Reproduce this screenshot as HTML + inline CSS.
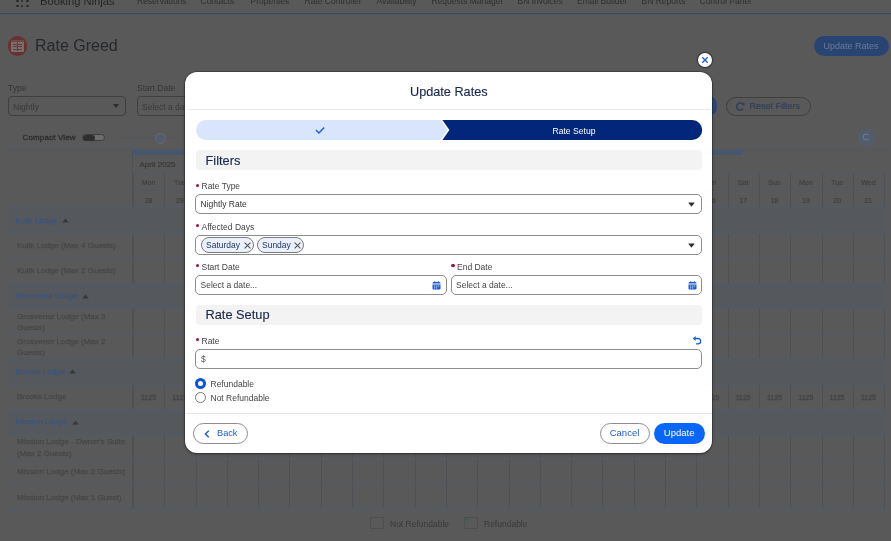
<!DOCTYPE html>
<html><head><meta charset="utf-8"><style>
html,body{margin:0;padding:0;width:891px;height:541px;overflow:hidden;background:#595959;}
body{position:relative;font-family:"Liberation Sans", sans-serif;}
.a{position:absolute;}
.t{position:absolute;line-height:1;white-space:nowrap;}
</style></head><body><div style="position:absolute;left:0;top:0;width:891px;height:541px;will-change:transform">
<div class="a" style="left:0px;top:0px;width:891px;height:541px;background:#595959;"></div>
<div class="a" style="left:16.3px;top:-4.7px;width:2.4px;height:2.4px;background:#2c2c2c;border-radius:50%;"></div>
<div class="a" style="left:16.3px;top:0.10000000000000009px;width:2.4px;height:2.4px;background:#2c2c2c;border-radius:50%;"></div>
<div class="a" style="left:16.3px;top:4.8px;width:2.4px;height:2.4px;background:#2c2c2c;border-radius:50%;"></div>
<div class="a" style="left:21.1px;top:-4.7px;width:2.4px;height:2.4px;background:#2c2c2c;border-radius:50%;"></div>
<div class="a" style="left:21.1px;top:0.10000000000000009px;width:2.4px;height:2.4px;background:#2c2c2c;border-radius:50%;"></div>
<div class="a" style="left:21.1px;top:4.8px;width:2.4px;height:2.4px;background:#2c2c2c;border-radius:50%;"></div>
<div class="a" style="left:26.2px;top:-4.7px;width:2.4px;height:2.4px;background:#2c2c2c;border-radius:50%;"></div>
<div class="a" style="left:26.2px;top:0.10000000000000009px;width:2.4px;height:2.4px;background:#2c2c2c;border-radius:50%;"></div>
<div class="a" style="left:26.2px;top:4.8px;width:2.4px;height:2.4px;background:#2c2c2c;border-radius:50%;"></div>
<div class="t" style="left:40px;top:-4.28px;font-size:11.2px;color:#262626;font-weight:400;">Booking Ninjas</div>
<div class="t" style="left:137px;top:-3.20px;font-size:8.5px;color:#2e2e2e;font-weight:400;">Reservations</div>
<div class="t" style="left:200.5px;top:-3.20px;font-size:8.5px;color:#2e2e2e;font-weight:400;">Contacts</div>
<div class="t" style="left:250.5px;top:-3.20px;font-size:8.5px;color:#2e2e2e;font-weight:400;">Properties</div>
<div class="t" style="left:304.5px;top:-3.20px;font-size:8.5px;color:#2e2e2e;font-weight:400;">Rate Controller</div>
<div class="t" style="left:376.5px;top:-3.20px;font-size:8.5px;color:#2e2e2e;font-weight:400;">Availability</div>
<div class="t" style="left:431.5px;top:-3.20px;font-size:8.5px;color:#2e2e2e;font-weight:400;">Requests Manager</div>
<div class="t" style="left:517.5px;top:-3.20px;font-size:8.5px;color:#2e2e2e;font-weight:400;">BN Invoices</div>
<div class="t" style="left:577px;top:-3.20px;font-size:8.5px;color:#2e2e2e;font-weight:400;">Email Builder</div>
<div class="t" style="left:641.5px;top:-3.20px;font-size:8.5px;color:#2e2e2e;font-weight:400;">BN Reports</div>
<div class="t" style="left:699.5px;top:-3.20px;font-size:8.5px;color:#2e2e2e;font-weight:400;">Control Panel</div>
<div class="a" style="left:0px;top:12.6px;width:891px;height:1.8px;background:#3b4a62;"></div>
<div class="a" style="left:0px;top:14px;width:891px;height:1px;background:#505357;"></div>
<div class="a" style="left:7.8px;top:36.2px;width:19.5px;height:19.5px;background:#6a302d;border-radius:50%;"></div>
<div class="a" style="left:11.3px;top:39.8px;width:12.4px;height:12.6px;background:#77706f;border-radius:1.2px;"></div>
<div class="a" style="left:11.3px;top:39.8px;width:12.4px;height:2.6px;background:#6a4a48;border-radius:1.2px 1.2px 0 0;"></div>
<div class="a" style="left:12.6px;top:43.6px;width:9.8px;height:0.7px;background:#6a3a38;"></div>
<div class="a" style="left:12.6px;top:46.2px;width:9.8px;height:0.7px;background:#6a3a38;"></div>
<div class="a" style="left:12.6px;top:48.8px;width:9.8px;height:0.7px;background:#6a3a38;"></div>
<div class="a" style="left:16.8px;top:42.4px;width:0.7px;height:8.6px;background:#6a3a38;"></div>
<div class="t" style="left:35px;top:38.46px;font-size:16px;color:#25282c;font-weight:400;">Rate Greed</div>
<div class="a" style="left:814px;top:36.4px;width:75px;height:19.6px;background:#284472;border-radius:10px;"></div>
<div class="t" style="left:823.5px;top:41.88px;font-size:9px;color:#6b7a94;font-weight:400;">Update Rates</div>
<div class="t" style="left:8px;top:84.30px;font-size:8.5px;color:#363636;font-weight:400;">Type</div>
<div class="a" style="left:8px;top:96px;width:118px;height:20px;border:1px solid #3f3f3f;border-radius:4px;box-sizing:border-box;"></div>
<div class="t" style="left:13px;top:103.10px;font-size:8.5px;color:#383838;font-weight:400;">Nightly</div>
<div class="a" style="left:113px;top:104px;width:0;height:0;border-left:3.5px solid transparent;border-right:3.5px solid transparent;border-top:4px solid #2e2e2e;"></div>
<div class="t" style="left:137px;top:84.30px;font-size:8.5px;color:#363636;font-weight:400;">Start Date</div>
<div class="a" style="left:137px;top:96px;width:118px;height:20px;border:1px solid #3f3f3f;border-radius:4px;box-sizing:border-box;"></div>
<div class="t" style="left:142px;top:103.10px;font-size:8.5px;color:#3a3a3a;font-weight:400;">Select a date...</div>
<div class="a" style="left:700px;top:96px;width:17px;height:20px;background:#2d4670;border-radius:10px;"></div>
<div class="a" style="left:726px;top:96.5px;width:85px;height:19.5px;border:1px solid #3f3f3f;border-radius:10px;box-sizing:border-box;"></div>
<div class="t" style="left:749.5px;top:101.88px;font-size:9px;color:#323f5c;font-weight:400;-webkit-text-stroke:0.2px #323f5c;">Reset Filters</div>
<svg class="a" style="left:734.5px;top:101px" width="11" height="11" viewBox="0 0 11 11"><path d="M8.6 4.2 A3.6 3.6 0 1 0 8.2 7.6" fill="none" stroke="#323f5c" stroke-width="1.6"/><path d="M6.6 2.4 L9.6 1.6 L9.2 5 Z" fill="#323f5c"/></svg>
<div class="a" style="left:7.5px;top:128px;width:881px;height:420px;border:1px solid #57595c;box-sizing:border-box;"></div>
<div class="t" style="left:22.5px;top:134.23px;font-size:8px;color:#2e2e2e;font-weight:400;-webkit-text-stroke:0.35px #2e2e2e;letter-spacing:0.15px;">Compact View</div>
<div class="a" style="left:82px;top:134.2px;width:23px;height:7px;background:#6c6c6c;border-radius:3.5px;border:1px solid #3e3e3e;box-sizing:border-box;"></div>
<div class="a" style="left:82.5px;top:134.5px;width:12px;height:6.5px;background:#2f2f2f;border-radius:3.5px;"></div>
<div class="a" style="left:119px;top:137.5px;width:57px;height:1px;background:#4f555e;"></div>
<div class="a" style="left:155px;top:132.5px;width:11px;height:11px;background:#535d69;border-radius:50%;border:1px solid #646b74;box-sizing:border-box;"></div>
<div class="a" style="left:857.5px;top:128.5px;width:17px;height:17px;background:#515c6c;border-radius:50%;"></div>
<svg class="a" style="left:861px;top:132px" width="10" height="10" viewBox="0 0 10 10"><path d="M7.5 3 A3 3 0 1 0 7.5 7" fill="none" stroke="#6d7a8c" stroke-width="1.2"/></svg>
<div class="a" style="left:8px;top:144.5px;width:880px;height:1px;background:#585a5d;"></div>
<div class="a" style="left:8px;top:148.5px;width:880px;height:1.2px;background:#505862;"></div>
<div class="a" style="left:132.5px;top:149.5px;width:610px;height:5.5px;background:#46566e;"></div>
<div class="t" style="left:139.5px;top:160.73px;font-size:8px;color:#383838;font-weight:400;-webkit-text-stroke:0.2px #383838;">April 2025</div>
<div class="a" style="left:132.5px;top:173px;width:752px;height:1px;background:#4f5864;"></div>
<div class="a" style="left:132.5px;top:190px;width:752px;height:1px;background:#4f5864;"></div>
<div class="a" style="left:132.9px;top:173px;width:1px;height:35px;background:#4e5156;"></div>
<div class="t" style="left:132.90px;width:31.3px;text-align:center;top:178.57px;font-size:7px;color:#404040;font-weight:400;-webkit-text-stroke:0.2px #404040;">Mon</div>
<div class="t" style="left:132.90px;width:31.3px;text-align:center;top:196.57px;font-size:7px;color:#404040;font-weight:400;-webkit-text-stroke:0.2px #404040;">28</div>
<div class="a" style="left:164.20000000000002px;top:173px;width:1px;height:35px;background:#4e5156;"></div>
<div class="t" style="left:164.20px;width:31.3px;text-align:center;top:178.57px;font-size:7px;color:#404040;font-weight:400;-webkit-text-stroke:0.2px #404040;">Tue</div>
<div class="t" style="left:164.20px;width:31.3px;text-align:center;top:196.57px;font-size:7px;color:#404040;font-weight:400;-webkit-text-stroke:0.2px #404040;">29</div>
<div class="a" style="left:195.5px;top:173px;width:1px;height:35px;background:#4e5156;"></div>
<div class="t" style="left:195.50px;width:31.3px;text-align:center;top:178.57px;font-size:7px;color:#404040;font-weight:400;-webkit-text-stroke:0.2px #404040;">Wed</div>
<div class="t" style="left:195.50px;width:31.3px;text-align:center;top:196.57px;font-size:7px;color:#404040;font-weight:400;-webkit-text-stroke:0.2px #404040;">30</div>
<div class="a" style="left:226.8px;top:173px;width:1px;height:35px;background:#4e5156;"></div>
<div class="t" style="left:226.80px;width:31.3px;text-align:center;top:178.57px;font-size:7px;color:#404040;font-weight:400;-webkit-text-stroke:0.2px #404040;">Thu</div>
<div class="t" style="left:226.80px;width:31.3px;text-align:center;top:196.57px;font-size:7px;color:#404040;font-weight:400;-webkit-text-stroke:0.2px #404040;">1</div>
<div class="a" style="left:258.1px;top:173px;width:1px;height:35px;background:#4e5156;"></div>
<div class="t" style="left:258.10px;width:31.3px;text-align:center;top:178.57px;font-size:7px;color:#404040;font-weight:400;-webkit-text-stroke:0.2px #404040;">Fri</div>
<div class="t" style="left:258.10px;width:31.3px;text-align:center;top:196.57px;font-size:7px;color:#404040;font-weight:400;-webkit-text-stroke:0.2px #404040;">2</div>
<div class="a" style="left:289.4px;top:173px;width:1px;height:35px;background:#4e5156;"></div>
<div class="t" style="left:289.40px;width:31.3px;text-align:center;top:178.57px;font-size:7px;color:#404040;font-weight:400;-webkit-text-stroke:0.2px #404040;">Sat</div>
<div class="t" style="left:289.40px;width:31.3px;text-align:center;top:196.57px;font-size:7px;color:#404040;font-weight:400;-webkit-text-stroke:0.2px #404040;">3</div>
<div class="a" style="left:320.70000000000005px;top:173px;width:1px;height:35px;background:#4e5156;"></div>
<div class="t" style="left:320.70px;width:31.3px;text-align:center;top:178.57px;font-size:7px;color:#404040;font-weight:400;-webkit-text-stroke:0.2px #404040;">Sun</div>
<div class="t" style="left:320.70px;width:31.3px;text-align:center;top:196.57px;font-size:7px;color:#404040;font-weight:400;-webkit-text-stroke:0.2px #404040;">4</div>
<div class="a" style="left:352.0px;top:173px;width:1px;height:35px;background:#4e5156;"></div>
<div class="t" style="left:352.00px;width:31.3px;text-align:center;top:178.57px;font-size:7px;color:#404040;font-weight:400;-webkit-text-stroke:0.2px #404040;">Mon</div>
<div class="t" style="left:352.00px;width:31.3px;text-align:center;top:196.57px;font-size:7px;color:#404040;font-weight:400;-webkit-text-stroke:0.2px #404040;">5</div>
<div class="a" style="left:383.3px;top:173px;width:1px;height:35px;background:#4e5156;"></div>
<div class="t" style="left:383.30px;width:31.3px;text-align:center;top:178.57px;font-size:7px;color:#404040;font-weight:400;-webkit-text-stroke:0.2px #404040;">Tue</div>
<div class="t" style="left:383.30px;width:31.3px;text-align:center;top:196.57px;font-size:7px;color:#404040;font-weight:400;-webkit-text-stroke:0.2px #404040;">6</div>
<div class="a" style="left:414.6px;top:173px;width:1px;height:35px;background:#4e5156;"></div>
<div class="t" style="left:414.60px;width:31.3px;text-align:center;top:178.57px;font-size:7px;color:#404040;font-weight:400;-webkit-text-stroke:0.2px #404040;">Wed</div>
<div class="t" style="left:414.60px;width:31.3px;text-align:center;top:196.57px;font-size:7px;color:#404040;font-weight:400;-webkit-text-stroke:0.2px #404040;">7</div>
<div class="a" style="left:445.9px;top:173px;width:1px;height:35px;background:#4e5156;"></div>
<div class="t" style="left:445.90px;width:31.3px;text-align:center;top:178.57px;font-size:7px;color:#404040;font-weight:400;-webkit-text-stroke:0.2px #404040;">Thu</div>
<div class="t" style="left:445.90px;width:31.3px;text-align:center;top:196.57px;font-size:7px;color:#404040;font-weight:400;-webkit-text-stroke:0.2px #404040;">8</div>
<div class="a" style="left:477.20000000000005px;top:173px;width:1px;height:35px;background:#4e5156;"></div>
<div class="t" style="left:477.20px;width:31.3px;text-align:center;top:178.57px;font-size:7px;color:#404040;font-weight:400;-webkit-text-stroke:0.2px #404040;">Fri</div>
<div class="t" style="left:477.20px;width:31.3px;text-align:center;top:196.57px;font-size:7px;color:#404040;font-weight:400;-webkit-text-stroke:0.2px #404040;">9</div>
<div class="a" style="left:508.5px;top:173px;width:1px;height:35px;background:#4e5156;"></div>
<div class="t" style="left:508.50px;width:31.3px;text-align:center;top:178.57px;font-size:7px;color:#404040;font-weight:400;-webkit-text-stroke:0.2px #404040;">Sat</div>
<div class="t" style="left:508.50px;width:31.3px;text-align:center;top:196.57px;font-size:7px;color:#404040;font-weight:400;-webkit-text-stroke:0.2px #404040;">10</div>
<div class="a" style="left:539.8000000000001px;top:173px;width:1px;height:35px;background:#4e5156;"></div>
<div class="t" style="left:539.80px;width:31.3px;text-align:center;top:178.57px;font-size:7px;color:#404040;font-weight:400;-webkit-text-stroke:0.2px #404040;">Sun</div>
<div class="t" style="left:539.80px;width:31.3px;text-align:center;top:196.57px;font-size:7px;color:#404040;font-weight:400;-webkit-text-stroke:0.2px #404040;">11</div>
<div class="a" style="left:571.1px;top:173px;width:1px;height:35px;background:#4e5156;"></div>
<div class="t" style="left:571.10px;width:31.3px;text-align:center;top:178.57px;font-size:7px;color:#404040;font-weight:400;-webkit-text-stroke:0.2px #404040;">Mon</div>
<div class="t" style="left:571.10px;width:31.3px;text-align:center;top:196.57px;font-size:7px;color:#404040;font-weight:400;-webkit-text-stroke:0.2px #404040;">12</div>
<div class="a" style="left:602.4px;top:173px;width:1px;height:35px;background:#4e5156;"></div>
<div class="t" style="left:602.40px;width:31.3px;text-align:center;top:178.57px;font-size:7px;color:#404040;font-weight:400;-webkit-text-stroke:0.2px #404040;">Tue</div>
<div class="t" style="left:602.40px;width:31.3px;text-align:center;top:196.57px;font-size:7px;color:#404040;font-weight:400;-webkit-text-stroke:0.2px #404040;">13</div>
<div class="a" style="left:633.7px;top:173px;width:1px;height:35px;background:#4e5156;"></div>
<div class="t" style="left:633.70px;width:31.3px;text-align:center;top:178.57px;font-size:7px;color:#404040;font-weight:400;-webkit-text-stroke:0.2px #404040;">Wed</div>
<div class="t" style="left:633.70px;width:31.3px;text-align:center;top:196.57px;font-size:7px;color:#404040;font-weight:400;-webkit-text-stroke:0.2px #404040;">14</div>
<div class="a" style="left:665.0px;top:173px;width:1px;height:35px;background:#4e5156;"></div>
<div class="t" style="left:665.00px;width:31.3px;text-align:center;top:178.57px;font-size:7px;color:#404040;font-weight:400;-webkit-text-stroke:0.2px #404040;">Thu</div>
<div class="t" style="left:665.00px;width:31.3px;text-align:center;top:196.57px;font-size:7px;color:#404040;font-weight:400;-webkit-text-stroke:0.2px #404040;">15</div>
<div class="a" style="left:696.3px;top:173px;width:1px;height:35px;background:#4e5156;"></div>
<div class="t" style="left:696.30px;width:31.3px;text-align:center;top:178.57px;font-size:7px;color:#404040;font-weight:400;-webkit-text-stroke:0.2px #404040;">Fri</div>
<div class="t" style="left:696.30px;width:31.3px;text-align:center;top:196.57px;font-size:7px;color:#404040;font-weight:400;-webkit-text-stroke:0.2px #404040;">16</div>
<div class="a" style="left:727.6px;top:173px;width:1px;height:35px;background:#4e5156;"></div>
<div class="t" style="left:727.60px;width:31.3px;text-align:center;top:178.57px;font-size:7px;color:#404040;font-weight:400;-webkit-text-stroke:0.2px #404040;">Sat</div>
<div class="t" style="left:727.60px;width:31.3px;text-align:center;top:196.57px;font-size:7px;color:#404040;font-weight:400;-webkit-text-stroke:0.2px #404040;">17</div>
<div class="a" style="left:758.9px;top:173px;width:1px;height:35px;background:#4e5156;"></div>
<div class="t" style="left:758.90px;width:31.3px;text-align:center;top:178.57px;font-size:7px;color:#404040;font-weight:400;-webkit-text-stroke:0.2px #404040;">Sun</div>
<div class="t" style="left:758.90px;width:31.3px;text-align:center;top:196.57px;font-size:7px;color:#404040;font-weight:400;-webkit-text-stroke:0.2px #404040;">18</div>
<div class="a" style="left:790.2px;top:173px;width:1px;height:35px;background:#4e5156;"></div>
<div class="t" style="left:790.20px;width:31.3px;text-align:center;top:178.57px;font-size:7px;color:#404040;font-weight:400;-webkit-text-stroke:0.2px #404040;">Mon</div>
<div class="t" style="left:790.20px;width:31.3px;text-align:center;top:196.57px;font-size:7px;color:#404040;font-weight:400;-webkit-text-stroke:0.2px #404040;">19</div>
<div class="a" style="left:821.5px;top:173px;width:1px;height:35px;background:#4e5156;"></div>
<div class="t" style="left:821.50px;width:31.3px;text-align:center;top:178.57px;font-size:7px;color:#404040;font-weight:400;-webkit-text-stroke:0.2px #404040;">Tue</div>
<div class="t" style="left:821.50px;width:31.3px;text-align:center;top:196.57px;font-size:7px;color:#404040;font-weight:400;-webkit-text-stroke:0.2px #404040;">20</div>
<div class="a" style="left:852.8px;top:173px;width:1px;height:35px;background:#4e5156;"></div>
<div class="t" style="left:852.80px;width:31.3px;text-align:center;top:178.57px;font-size:7px;color:#404040;font-weight:400;-webkit-text-stroke:0.2px #404040;">Wed</div>
<div class="t" style="left:852.80px;width:31.3px;text-align:center;top:196.57px;font-size:7px;color:#404040;font-weight:400;-webkit-text-stroke:0.2px #404040;">21</div>
<div class="a" style="left:884.1px;top:173px;width:1px;height:337px;background:#4e5156;"></div>
<div class="a" style="left:131.5px;top:150px;width:1px;height:360px;background:#4e5156;"></div>
<div class="a" style="left:8px;top:207.4px;width:877px;height:25.17px;background:#55585c;"></div>
<div class="t" style="left:15.5px;top:216.63px;font-size:8px;color:#3a5582;font-weight:400;-webkit-text-stroke:0.25px #3a5582;">Kulik Lodge</div>
<svg class="a" style="left:60.8px;top:217.2px" width="9" height="7"><path d="M1.3 5.4 L4.5 1.6 L7.7 5.4 Z" fill="#35383d"/></svg>
<div class="a" style="left:8px;top:207.4px;width:877px;height:1px;background:#4f5a6a;"></div>
<div class="t" style="left:17px;top:241.80px;font-size:8px;color:#474747;font-weight:400;-webkit-text-stroke:0.25px #474747;">Kulik Lodge (Max 4 Guests)</div>
<div class="a" style="left:132.9px;top:232.57px;width:1px;height:25.17px;background:#4e5156;"></div>
<div class="a" style="left:164.20000000000002px;top:232.57px;width:1px;height:25.17px;background:#4e5156;"></div>
<div class="a" style="left:195.5px;top:232.57px;width:1px;height:25.17px;background:#4e5156;"></div>
<div class="a" style="left:226.8px;top:232.57px;width:1px;height:25.17px;background:#4e5156;"></div>
<div class="a" style="left:258.1px;top:232.57px;width:1px;height:25.17px;background:#4e5156;"></div>
<div class="a" style="left:289.4px;top:232.57px;width:1px;height:25.17px;background:#4e5156;"></div>
<div class="a" style="left:320.70000000000005px;top:232.57px;width:1px;height:25.17px;background:#4e5156;"></div>
<div class="a" style="left:352.0px;top:232.57px;width:1px;height:25.17px;background:#4e5156;"></div>
<div class="a" style="left:383.3px;top:232.57px;width:1px;height:25.17px;background:#4e5156;"></div>
<div class="a" style="left:414.6px;top:232.57px;width:1px;height:25.17px;background:#4e5156;"></div>
<div class="a" style="left:445.9px;top:232.57px;width:1px;height:25.17px;background:#4e5156;"></div>
<div class="a" style="left:477.20000000000005px;top:232.57px;width:1px;height:25.17px;background:#4e5156;"></div>
<div class="a" style="left:508.5px;top:232.57px;width:1px;height:25.17px;background:#4e5156;"></div>
<div class="a" style="left:539.8000000000001px;top:232.57px;width:1px;height:25.17px;background:#4e5156;"></div>
<div class="a" style="left:571.1px;top:232.57px;width:1px;height:25.17px;background:#4e5156;"></div>
<div class="a" style="left:602.4px;top:232.57px;width:1px;height:25.17px;background:#4e5156;"></div>
<div class="a" style="left:633.7px;top:232.57px;width:1px;height:25.17px;background:#4e5156;"></div>
<div class="a" style="left:665.0px;top:232.57px;width:1px;height:25.17px;background:#4e5156;"></div>
<div class="a" style="left:696.3px;top:232.57px;width:1px;height:25.17px;background:#4e5156;"></div>
<div class="a" style="left:727.6px;top:232.57px;width:1px;height:25.17px;background:#4e5156;"></div>
<div class="a" style="left:758.9px;top:232.57px;width:1px;height:25.17px;background:#4e5156;"></div>
<div class="a" style="left:790.2px;top:232.57px;width:1px;height:25.17px;background:#4e5156;"></div>
<div class="a" style="left:821.5px;top:232.57px;width:1px;height:25.17px;background:#4e5156;"></div>
<div class="a" style="left:852.8px;top:232.57px;width:1px;height:25.17px;background:#4e5156;"></div>
<div class="a" style="left:8px;top:232.57px;width:877px;height:1px;background:#4f5a6a;"></div>
<div class="t" style="left:17px;top:266.97px;font-size:8px;color:#474747;font-weight:400;-webkit-text-stroke:0.25px #474747;">Kulik Lodge (Max 2 Guests)</div>
<div class="a" style="left:132.9px;top:257.74px;width:1px;height:25.17px;background:#4e5156;"></div>
<div class="a" style="left:164.20000000000002px;top:257.74px;width:1px;height:25.17px;background:#4e5156;"></div>
<div class="a" style="left:195.5px;top:257.74px;width:1px;height:25.17px;background:#4e5156;"></div>
<div class="a" style="left:226.8px;top:257.74px;width:1px;height:25.17px;background:#4e5156;"></div>
<div class="a" style="left:258.1px;top:257.74px;width:1px;height:25.17px;background:#4e5156;"></div>
<div class="a" style="left:289.4px;top:257.74px;width:1px;height:25.17px;background:#4e5156;"></div>
<div class="a" style="left:320.70000000000005px;top:257.74px;width:1px;height:25.17px;background:#4e5156;"></div>
<div class="a" style="left:352.0px;top:257.74px;width:1px;height:25.17px;background:#4e5156;"></div>
<div class="a" style="left:383.3px;top:257.74px;width:1px;height:25.17px;background:#4e5156;"></div>
<div class="a" style="left:414.6px;top:257.74px;width:1px;height:25.17px;background:#4e5156;"></div>
<div class="a" style="left:445.9px;top:257.74px;width:1px;height:25.17px;background:#4e5156;"></div>
<div class="a" style="left:477.20000000000005px;top:257.74px;width:1px;height:25.17px;background:#4e5156;"></div>
<div class="a" style="left:508.5px;top:257.74px;width:1px;height:25.17px;background:#4e5156;"></div>
<div class="a" style="left:539.8000000000001px;top:257.74px;width:1px;height:25.17px;background:#4e5156;"></div>
<div class="a" style="left:571.1px;top:257.74px;width:1px;height:25.17px;background:#4e5156;"></div>
<div class="a" style="left:602.4px;top:257.74px;width:1px;height:25.17px;background:#4e5156;"></div>
<div class="a" style="left:633.7px;top:257.74px;width:1px;height:25.17px;background:#4e5156;"></div>
<div class="a" style="left:665.0px;top:257.74px;width:1px;height:25.17px;background:#4e5156;"></div>
<div class="a" style="left:696.3px;top:257.74px;width:1px;height:25.17px;background:#4e5156;"></div>
<div class="a" style="left:727.6px;top:257.74px;width:1px;height:25.17px;background:#4e5156;"></div>
<div class="a" style="left:758.9px;top:257.74px;width:1px;height:25.17px;background:#4e5156;"></div>
<div class="a" style="left:790.2px;top:257.74px;width:1px;height:25.17px;background:#4e5156;"></div>
<div class="a" style="left:821.5px;top:257.74px;width:1px;height:25.17px;background:#4e5156;"></div>
<div class="a" style="left:852.8px;top:257.74px;width:1px;height:25.17px;background:#4e5156;"></div>
<div class="a" style="left:8px;top:257.74px;width:877px;height:1px;background:#4f5a6a;"></div>
<div class="a" style="left:8px;top:282.91px;width:877px;height:25.17px;background:#55585c;"></div>
<div class="t" style="left:15.5px;top:292.14px;font-size:8px;color:#3a5582;font-weight:400;-webkit-text-stroke:0.25px #3a5582;">Grosvenor Lodge</div>
<svg class="a" style="left:80.8px;top:292.7px" width="9" height="7"><path d="M1.3 5.4 L4.5 1.6 L7.7 5.4 Z" fill="#35383d"/></svg>
<div class="a" style="left:8px;top:282.91px;width:877px;height:1px;background:#4f5a6a;"></div>
<div class="t" style="left:17px;top:310.58px;font-size:8px;line-height:11.5px;color:#474747;-webkit-text-stroke:0.25px #474747;">Grosvenor Lodge (Max 3<br>Guests)</div>
<div class="a" style="left:132.9px;top:308.08000000000004px;width:1px;height:25.17px;background:#4e5156;"></div>
<div class="a" style="left:164.20000000000002px;top:308.08000000000004px;width:1px;height:25.17px;background:#4e5156;"></div>
<div class="a" style="left:195.5px;top:308.08000000000004px;width:1px;height:25.17px;background:#4e5156;"></div>
<div class="a" style="left:226.8px;top:308.08000000000004px;width:1px;height:25.17px;background:#4e5156;"></div>
<div class="a" style="left:258.1px;top:308.08000000000004px;width:1px;height:25.17px;background:#4e5156;"></div>
<div class="a" style="left:289.4px;top:308.08000000000004px;width:1px;height:25.17px;background:#4e5156;"></div>
<div class="a" style="left:320.70000000000005px;top:308.08000000000004px;width:1px;height:25.17px;background:#4e5156;"></div>
<div class="a" style="left:352.0px;top:308.08000000000004px;width:1px;height:25.17px;background:#4e5156;"></div>
<div class="a" style="left:383.3px;top:308.08000000000004px;width:1px;height:25.17px;background:#4e5156;"></div>
<div class="a" style="left:414.6px;top:308.08000000000004px;width:1px;height:25.17px;background:#4e5156;"></div>
<div class="a" style="left:445.9px;top:308.08000000000004px;width:1px;height:25.17px;background:#4e5156;"></div>
<div class="a" style="left:477.20000000000005px;top:308.08000000000004px;width:1px;height:25.17px;background:#4e5156;"></div>
<div class="a" style="left:508.5px;top:308.08000000000004px;width:1px;height:25.17px;background:#4e5156;"></div>
<div class="a" style="left:539.8000000000001px;top:308.08000000000004px;width:1px;height:25.17px;background:#4e5156;"></div>
<div class="a" style="left:571.1px;top:308.08000000000004px;width:1px;height:25.17px;background:#4e5156;"></div>
<div class="a" style="left:602.4px;top:308.08000000000004px;width:1px;height:25.17px;background:#4e5156;"></div>
<div class="a" style="left:633.7px;top:308.08000000000004px;width:1px;height:25.17px;background:#4e5156;"></div>
<div class="a" style="left:665.0px;top:308.08000000000004px;width:1px;height:25.17px;background:#4e5156;"></div>
<div class="a" style="left:696.3px;top:308.08000000000004px;width:1px;height:25.17px;background:#4e5156;"></div>
<div class="a" style="left:727.6px;top:308.08000000000004px;width:1px;height:25.17px;background:#4e5156;"></div>
<div class="a" style="left:758.9px;top:308.08000000000004px;width:1px;height:25.17px;background:#4e5156;"></div>
<div class="a" style="left:790.2px;top:308.08000000000004px;width:1px;height:25.17px;background:#4e5156;"></div>
<div class="a" style="left:821.5px;top:308.08000000000004px;width:1px;height:25.17px;background:#4e5156;"></div>
<div class="a" style="left:852.8px;top:308.08000000000004px;width:1px;height:25.17px;background:#4e5156;"></div>
<div class="a" style="left:8px;top:308.08000000000004px;width:877px;height:1px;background:#4f5a6a;"></div>
<div class="t" style="left:17px;top:335.75px;font-size:8px;line-height:11.5px;color:#474747;-webkit-text-stroke:0.25px #474747;">Grosvenor Lodge (Max 2<br>Guests)</div>
<div class="a" style="left:132.9px;top:333.25px;width:1px;height:25.17px;background:#4e5156;"></div>
<div class="a" style="left:164.20000000000002px;top:333.25px;width:1px;height:25.17px;background:#4e5156;"></div>
<div class="a" style="left:195.5px;top:333.25px;width:1px;height:25.17px;background:#4e5156;"></div>
<div class="a" style="left:226.8px;top:333.25px;width:1px;height:25.17px;background:#4e5156;"></div>
<div class="a" style="left:258.1px;top:333.25px;width:1px;height:25.17px;background:#4e5156;"></div>
<div class="a" style="left:289.4px;top:333.25px;width:1px;height:25.17px;background:#4e5156;"></div>
<div class="a" style="left:320.70000000000005px;top:333.25px;width:1px;height:25.17px;background:#4e5156;"></div>
<div class="a" style="left:352.0px;top:333.25px;width:1px;height:25.17px;background:#4e5156;"></div>
<div class="a" style="left:383.3px;top:333.25px;width:1px;height:25.17px;background:#4e5156;"></div>
<div class="a" style="left:414.6px;top:333.25px;width:1px;height:25.17px;background:#4e5156;"></div>
<div class="a" style="left:445.9px;top:333.25px;width:1px;height:25.17px;background:#4e5156;"></div>
<div class="a" style="left:477.20000000000005px;top:333.25px;width:1px;height:25.17px;background:#4e5156;"></div>
<div class="a" style="left:508.5px;top:333.25px;width:1px;height:25.17px;background:#4e5156;"></div>
<div class="a" style="left:539.8000000000001px;top:333.25px;width:1px;height:25.17px;background:#4e5156;"></div>
<div class="a" style="left:571.1px;top:333.25px;width:1px;height:25.17px;background:#4e5156;"></div>
<div class="a" style="left:602.4px;top:333.25px;width:1px;height:25.17px;background:#4e5156;"></div>
<div class="a" style="left:633.7px;top:333.25px;width:1px;height:25.17px;background:#4e5156;"></div>
<div class="a" style="left:665.0px;top:333.25px;width:1px;height:25.17px;background:#4e5156;"></div>
<div class="a" style="left:696.3px;top:333.25px;width:1px;height:25.17px;background:#4e5156;"></div>
<div class="a" style="left:727.6px;top:333.25px;width:1px;height:25.17px;background:#4e5156;"></div>
<div class="a" style="left:758.9px;top:333.25px;width:1px;height:25.17px;background:#4e5156;"></div>
<div class="a" style="left:790.2px;top:333.25px;width:1px;height:25.17px;background:#4e5156;"></div>
<div class="a" style="left:821.5px;top:333.25px;width:1px;height:25.17px;background:#4e5156;"></div>
<div class="a" style="left:852.8px;top:333.25px;width:1px;height:25.17px;background:#4e5156;"></div>
<div class="a" style="left:8px;top:333.25px;width:877px;height:1px;background:#4f5a6a;"></div>
<div class="a" style="left:8px;top:358.42px;width:877px;height:25.17px;background:#55585c;"></div>
<div class="t" style="left:15.5px;top:367.65px;font-size:8px;color:#3a5582;font-weight:400;-webkit-text-stroke:0.25px #3a5582;">Brooks Lodge</div>
<svg class="a" style="left:68.4px;top:368.2px" width="9" height="7"><path d="M1.3 5.4 L4.5 1.6 L7.7 5.4 Z" fill="#35383d"/></svg>
<div class="a" style="left:8px;top:358.42px;width:877px;height:1px;background:#4f5a6a;"></div>
<div class="t" style="left:17px;top:392.82px;font-size:8px;color:#474747;font-weight:400;-webkit-text-stroke:0.25px #474747;">Brooks Lodge</div>
<div class="a" style="left:132.9px;top:383.59000000000003px;width:1px;height:25.17px;background:#4e5156;"></div>
<div class="a" style="left:164.20000000000002px;top:383.59000000000003px;width:1px;height:25.17px;background:#4e5156;"></div>
<div class="a" style="left:195.5px;top:383.59000000000003px;width:1px;height:25.17px;background:#4e5156;"></div>
<div class="a" style="left:226.8px;top:383.59000000000003px;width:1px;height:25.17px;background:#4e5156;"></div>
<div class="a" style="left:258.1px;top:383.59000000000003px;width:1px;height:25.17px;background:#4e5156;"></div>
<div class="a" style="left:289.4px;top:383.59000000000003px;width:1px;height:25.17px;background:#4e5156;"></div>
<div class="a" style="left:320.70000000000005px;top:383.59000000000003px;width:1px;height:25.17px;background:#4e5156;"></div>
<div class="a" style="left:352.0px;top:383.59000000000003px;width:1px;height:25.17px;background:#4e5156;"></div>
<div class="a" style="left:383.3px;top:383.59000000000003px;width:1px;height:25.17px;background:#4e5156;"></div>
<div class="a" style="left:414.6px;top:383.59000000000003px;width:1px;height:25.17px;background:#4e5156;"></div>
<div class="a" style="left:445.9px;top:383.59000000000003px;width:1px;height:25.17px;background:#4e5156;"></div>
<div class="a" style="left:477.20000000000005px;top:383.59000000000003px;width:1px;height:25.17px;background:#4e5156;"></div>
<div class="a" style="left:508.5px;top:383.59000000000003px;width:1px;height:25.17px;background:#4e5156;"></div>
<div class="a" style="left:539.8000000000001px;top:383.59000000000003px;width:1px;height:25.17px;background:#4e5156;"></div>
<div class="a" style="left:571.1px;top:383.59000000000003px;width:1px;height:25.17px;background:#4e5156;"></div>
<div class="a" style="left:602.4px;top:383.59000000000003px;width:1px;height:25.17px;background:#4e5156;"></div>
<div class="a" style="left:633.7px;top:383.59000000000003px;width:1px;height:25.17px;background:#4e5156;"></div>
<div class="a" style="left:665.0px;top:383.59000000000003px;width:1px;height:25.17px;background:#4e5156;"></div>
<div class="a" style="left:696.3px;top:383.59000000000003px;width:1px;height:25.17px;background:#4e5156;"></div>
<div class="a" style="left:727.6px;top:383.59000000000003px;width:1px;height:25.17px;background:#4e5156;"></div>
<div class="a" style="left:758.9px;top:383.59000000000003px;width:1px;height:25.17px;background:#4e5156;"></div>
<div class="a" style="left:790.2px;top:383.59000000000003px;width:1px;height:25.17px;background:#4e5156;"></div>
<div class="a" style="left:821.5px;top:383.59000000000003px;width:1px;height:25.17px;background:#4e5156;"></div>
<div class="a" style="left:852.8px;top:383.59000000000003px;width:1px;height:25.17px;background:#4e5156;"></div>
<div class="t" style="left:132.90px;width:31.3px;text-align:center;top:393.66px;font-size:7px;color:#444;font-weight:400;-webkit-text-stroke:0.3px #444;">1125</div>
<div class="t" style="left:164.20px;width:31.3px;text-align:center;top:393.66px;font-size:7px;color:#444;font-weight:400;-webkit-text-stroke:0.3px #444;">1125</div>
<div class="t" style="left:195.50px;width:31.3px;text-align:center;top:393.66px;font-size:7px;color:#444;font-weight:400;-webkit-text-stroke:0.3px #444;">1125</div>
<div class="t" style="left:226.80px;width:31.3px;text-align:center;top:393.66px;font-size:7px;color:#444;font-weight:400;-webkit-text-stroke:0.3px #444;">1125</div>
<div class="t" style="left:258.10px;width:31.3px;text-align:center;top:393.66px;font-size:7px;color:#444;font-weight:400;-webkit-text-stroke:0.3px #444;">1125</div>
<div class="t" style="left:289.40px;width:31.3px;text-align:center;top:393.66px;font-size:7px;color:#444;font-weight:400;-webkit-text-stroke:0.3px #444;">1125</div>
<div class="t" style="left:320.70px;width:31.3px;text-align:center;top:393.66px;font-size:7px;color:#444;font-weight:400;-webkit-text-stroke:0.3px #444;">1125</div>
<div class="t" style="left:352.00px;width:31.3px;text-align:center;top:393.66px;font-size:7px;color:#444;font-weight:400;-webkit-text-stroke:0.3px #444;">1125</div>
<div class="t" style="left:383.30px;width:31.3px;text-align:center;top:393.66px;font-size:7px;color:#444;font-weight:400;-webkit-text-stroke:0.3px #444;">1125</div>
<div class="t" style="left:414.60px;width:31.3px;text-align:center;top:393.66px;font-size:7px;color:#444;font-weight:400;-webkit-text-stroke:0.3px #444;">1125</div>
<div class="t" style="left:445.90px;width:31.3px;text-align:center;top:393.66px;font-size:7px;color:#444;font-weight:400;-webkit-text-stroke:0.3px #444;">1125</div>
<div class="t" style="left:477.20px;width:31.3px;text-align:center;top:393.66px;font-size:7px;color:#444;font-weight:400;-webkit-text-stroke:0.3px #444;">1125</div>
<div class="t" style="left:508.50px;width:31.3px;text-align:center;top:393.66px;font-size:7px;color:#444;font-weight:400;-webkit-text-stroke:0.3px #444;">1125</div>
<div class="t" style="left:539.80px;width:31.3px;text-align:center;top:393.66px;font-size:7px;color:#444;font-weight:400;-webkit-text-stroke:0.3px #444;">1125</div>
<div class="t" style="left:571.10px;width:31.3px;text-align:center;top:393.66px;font-size:7px;color:#444;font-weight:400;-webkit-text-stroke:0.3px #444;">1125</div>
<div class="t" style="left:602.40px;width:31.3px;text-align:center;top:393.66px;font-size:7px;color:#444;font-weight:400;-webkit-text-stroke:0.3px #444;">1125</div>
<div class="t" style="left:633.70px;width:31.3px;text-align:center;top:393.66px;font-size:7px;color:#444;font-weight:400;-webkit-text-stroke:0.3px #444;">1125</div>
<div class="t" style="left:665.00px;width:31.3px;text-align:center;top:393.66px;font-size:7px;color:#444;font-weight:400;-webkit-text-stroke:0.3px #444;">1125</div>
<div class="t" style="left:696.30px;width:31.3px;text-align:center;top:393.66px;font-size:7px;color:#444;font-weight:400;-webkit-text-stroke:0.3px #444;">1125</div>
<div class="t" style="left:727.60px;width:31.3px;text-align:center;top:393.66px;font-size:7px;color:#444;font-weight:400;-webkit-text-stroke:0.3px #444;">1125</div>
<div class="t" style="left:758.90px;width:31.3px;text-align:center;top:393.66px;font-size:7px;color:#444;font-weight:400;-webkit-text-stroke:0.3px #444;">1125</div>
<div class="t" style="left:790.20px;width:31.3px;text-align:center;top:393.66px;font-size:7px;color:#444;font-weight:400;-webkit-text-stroke:0.3px #444;">1125</div>
<div class="t" style="left:821.50px;width:31.3px;text-align:center;top:393.66px;font-size:7px;color:#444;font-weight:400;-webkit-text-stroke:0.3px #444;">1125</div>
<div class="t" style="left:852.80px;width:31.3px;text-align:center;top:393.66px;font-size:7px;color:#444;font-weight:400;-webkit-text-stroke:0.3px #444;">1125</div>
<div class="a" style="left:8px;top:383.59000000000003px;width:877px;height:1px;background:#4f5a6a;"></div>
<div class="a" style="left:8px;top:408.76px;width:877px;height:25.17px;background:#55585c;"></div>
<div class="t" style="left:15.5px;top:417.99px;font-size:8px;color:#3a5582;font-weight:400;-webkit-text-stroke:0.25px #3a5582;">Mission Lodge</div>
<svg class="a" style="left:70.6px;top:418.6px" width="9" height="7"><path d="M1.3 5.4 L4.5 1.6 L7.7 5.4 Z" fill="#35383d"/></svg>
<div class="a" style="left:8px;top:408.76px;width:877px;height:1px;background:#4f5a6a;"></div>
<div class="t" style="left:17px;top:436.43px;font-size:8px;line-height:11.5px;color:#474747;-webkit-text-stroke:0.25px #474747;">Mission Lodge - Owner's Suite<br>(Max 2 Guests)</div>
<div class="a" style="left:132.9px;top:433.93000000000006px;width:1px;height:25.17px;background:#4e5156;"></div>
<div class="a" style="left:164.20000000000002px;top:433.93000000000006px;width:1px;height:25.17px;background:#4e5156;"></div>
<div class="a" style="left:195.5px;top:433.93000000000006px;width:1px;height:25.17px;background:#4e5156;"></div>
<div class="a" style="left:226.8px;top:433.93000000000006px;width:1px;height:25.17px;background:#4e5156;"></div>
<div class="a" style="left:258.1px;top:433.93000000000006px;width:1px;height:25.17px;background:#4e5156;"></div>
<div class="a" style="left:289.4px;top:433.93000000000006px;width:1px;height:25.17px;background:#4e5156;"></div>
<div class="a" style="left:320.70000000000005px;top:433.93000000000006px;width:1px;height:25.17px;background:#4e5156;"></div>
<div class="a" style="left:352.0px;top:433.93000000000006px;width:1px;height:25.17px;background:#4e5156;"></div>
<div class="a" style="left:383.3px;top:433.93000000000006px;width:1px;height:25.17px;background:#4e5156;"></div>
<div class="a" style="left:414.6px;top:433.93000000000006px;width:1px;height:25.17px;background:#4e5156;"></div>
<div class="a" style="left:445.9px;top:433.93000000000006px;width:1px;height:25.17px;background:#4e5156;"></div>
<div class="a" style="left:477.20000000000005px;top:433.93000000000006px;width:1px;height:25.17px;background:#4e5156;"></div>
<div class="a" style="left:508.5px;top:433.93000000000006px;width:1px;height:25.17px;background:#4e5156;"></div>
<div class="a" style="left:539.8000000000001px;top:433.93000000000006px;width:1px;height:25.17px;background:#4e5156;"></div>
<div class="a" style="left:571.1px;top:433.93000000000006px;width:1px;height:25.17px;background:#4e5156;"></div>
<div class="a" style="left:602.4px;top:433.93000000000006px;width:1px;height:25.17px;background:#4e5156;"></div>
<div class="a" style="left:633.7px;top:433.93000000000006px;width:1px;height:25.17px;background:#4e5156;"></div>
<div class="a" style="left:665.0px;top:433.93000000000006px;width:1px;height:25.17px;background:#4e5156;"></div>
<div class="a" style="left:696.3px;top:433.93000000000006px;width:1px;height:25.17px;background:#4e5156;"></div>
<div class="a" style="left:727.6px;top:433.93000000000006px;width:1px;height:25.17px;background:#4e5156;"></div>
<div class="a" style="left:758.9px;top:433.93000000000006px;width:1px;height:25.17px;background:#4e5156;"></div>
<div class="a" style="left:790.2px;top:433.93000000000006px;width:1px;height:25.17px;background:#4e5156;"></div>
<div class="a" style="left:821.5px;top:433.93000000000006px;width:1px;height:25.17px;background:#4e5156;"></div>
<div class="a" style="left:852.8px;top:433.93000000000006px;width:1px;height:25.17px;background:#4e5156;"></div>
<div class="a" style="left:8px;top:433.93000000000006px;width:877px;height:1px;background:#4f5a6a;"></div>
<div class="t" style="left:17px;top:468.33px;font-size:8px;color:#474747;font-weight:400;-webkit-text-stroke:0.25px #474747;">Mission Lodge (Max 2 Guests)</div>
<div class="a" style="left:132.9px;top:459.1px;width:1px;height:25.17px;background:#4e5156;"></div>
<div class="a" style="left:164.20000000000002px;top:459.1px;width:1px;height:25.17px;background:#4e5156;"></div>
<div class="a" style="left:195.5px;top:459.1px;width:1px;height:25.17px;background:#4e5156;"></div>
<div class="a" style="left:226.8px;top:459.1px;width:1px;height:25.17px;background:#4e5156;"></div>
<div class="a" style="left:258.1px;top:459.1px;width:1px;height:25.17px;background:#4e5156;"></div>
<div class="a" style="left:289.4px;top:459.1px;width:1px;height:25.17px;background:#4e5156;"></div>
<div class="a" style="left:320.70000000000005px;top:459.1px;width:1px;height:25.17px;background:#4e5156;"></div>
<div class="a" style="left:352.0px;top:459.1px;width:1px;height:25.17px;background:#4e5156;"></div>
<div class="a" style="left:383.3px;top:459.1px;width:1px;height:25.17px;background:#4e5156;"></div>
<div class="a" style="left:414.6px;top:459.1px;width:1px;height:25.17px;background:#4e5156;"></div>
<div class="a" style="left:445.9px;top:459.1px;width:1px;height:25.17px;background:#4e5156;"></div>
<div class="a" style="left:477.20000000000005px;top:459.1px;width:1px;height:25.17px;background:#4e5156;"></div>
<div class="a" style="left:508.5px;top:459.1px;width:1px;height:25.17px;background:#4e5156;"></div>
<div class="a" style="left:539.8000000000001px;top:459.1px;width:1px;height:25.17px;background:#4e5156;"></div>
<div class="a" style="left:571.1px;top:459.1px;width:1px;height:25.17px;background:#4e5156;"></div>
<div class="a" style="left:602.4px;top:459.1px;width:1px;height:25.17px;background:#4e5156;"></div>
<div class="a" style="left:633.7px;top:459.1px;width:1px;height:25.17px;background:#4e5156;"></div>
<div class="a" style="left:665.0px;top:459.1px;width:1px;height:25.17px;background:#4e5156;"></div>
<div class="a" style="left:696.3px;top:459.1px;width:1px;height:25.17px;background:#4e5156;"></div>
<div class="a" style="left:727.6px;top:459.1px;width:1px;height:25.17px;background:#4e5156;"></div>
<div class="a" style="left:758.9px;top:459.1px;width:1px;height:25.17px;background:#4e5156;"></div>
<div class="a" style="left:790.2px;top:459.1px;width:1px;height:25.17px;background:#4e5156;"></div>
<div class="a" style="left:821.5px;top:459.1px;width:1px;height:25.17px;background:#4e5156;"></div>
<div class="a" style="left:852.8px;top:459.1px;width:1px;height:25.17px;background:#4e5156;"></div>
<div class="a" style="left:8px;top:459.1px;width:877px;height:1px;background:#4f5a6a;"></div>
<div class="t" style="left:17px;top:493.50px;font-size:8px;color:#474747;font-weight:400;-webkit-text-stroke:0.25px #474747;">Mission Lodge (Max 1 Guest)</div>
<div class="a" style="left:132.9px;top:484.27px;width:1px;height:25.17px;background:#4e5156;"></div>
<div class="a" style="left:164.20000000000002px;top:484.27px;width:1px;height:25.17px;background:#4e5156;"></div>
<div class="a" style="left:195.5px;top:484.27px;width:1px;height:25.17px;background:#4e5156;"></div>
<div class="a" style="left:226.8px;top:484.27px;width:1px;height:25.17px;background:#4e5156;"></div>
<div class="a" style="left:258.1px;top:484.27px;width:1px;height:25.17px;background:#4e5156;"></div>
<div class="a" style="left:289.4px;top:484.27px;width:1px;height:25.17px;background:#4e5156;"></div>
<div class="a" style="left:320.70000000000005px;top:484.27px;width:1px;height:25.17px;background:#4e5156;"></div>
<div class="a" style="left:352.0px;top:484.27px;width:1px;height:25.17px;background:#4e5156;"></div>
<div class="a" style="left:383.3px;top:484.27px;width:1px;height:25.17px;background:#4e5156;"></div>
<div class="a" style="left:414.6px;top:484.27px;width:1px;height:25.17px;background:#4e5156;"></div>
<div class="a" style="left:445.9px;top:484.27px;width:1px;height:25.17px;background:#4e5156;"></div>
<div class="a" style="left:477.20000000000005px;top:484.27px;width:1px;height:25.17px;background:#4e5156;"></div>
<div class="a" style="left:508.5px;top:484.27px;width:1px;height:25.17px;background:#4e5156;"></div>
<div class="a" style="left:539.8000000000001px;top:484.27px;width:1px;height:25.17px;background:#4e5156;"></div>
<div class="a" style="left:571.1px;top:484.27px;width:1px;height:25.17px;background:#4e5156;"></div>
<div class="a" style="left:602.4px;top:484.27px;width:1px;height:25.17px;background:#4e5156;"></div>
<div class="a" style="left:633.7px;top:484.27px;width:1px;height:25.17px;background:#4e5156;"></div>
<div class="a" style="left:665.0px;top:484.27px;width:1px;height:25.17px;background:#4e5156;"></div>
<div class="a" style="left:696.3px;top:484.27px;width:1px;height:25.17px;background:#4e5156;"></div>
<div class="a" style="left:727.6px;top:484.27px;width:1px;height:25.17px;background:#4e5156;"></div>
<div class="a" style="left:758.9px;top:484.27px;width:1px;height:25.17px;background:#4e5156;"></div>
<div class="a" style="left:790.2px;top:484.27px;width:1px;height:25.17px;background:#4e5156;"></div>
<div class="a" style="left:821.5px;top:484.27px;width:1px;height:25.17px;background:#4e5156;"></div>
<div class="a" style="left:852.8px;top:484.27px;width:1px;height:25.17px;background:#4e5156;"></div>
<div class="a" style="left:8px;top:484.27px;width:877px;height:1px;background:#4f5a6a;"></div>
<div class="a" style="left:8px;top:509.5px;width:877px;height:1px;background:#4f5a6a;"></div>
<div class="a" style="left:8px;top:506.8px;width:877px;height:1px;background:#535860;"></div>
<div class="a" style="left:370px;top:517px;width:14px;height:12px;border:1px solid #4f4f4f;box-sizing:border-box;"></div>
<div class="t" style="left:390px;top:519.80px;font-size:8.5px;color:#3a3a3a;font-weight:400;">Not Refundable</div>
<svg class="a" style="left:464px;top:517px" width="14" height="12"><rect x="0.5" y="0.5" width="13" height="11" fill="none" stroke="#4f4f4f"/><path d="M1 1 L7 1 L1 8 Z" fill="#48604f"/></svg>
<div class="t" style="left:484px;top:519.80px;font-size:8.5px;color:#3a3a3a;font-weight:400;">Refundable</div>
<div class="a" style="left:185.4px;top:72px;width:526.6px;height:381px;background:#fff;border-radius:12px;box-shadow:0 0 0 0.8px rgba(0,0,0,0.3),0 1px 3px rgba(0,0,0,0.35);"></div>
<div class="a" style="left:697.5px;top:52.5px;width:14px;height:14px;background:#fff;border-radius:50%;box-shadow:0 0 0 1px rgba(0,0,0,0.3),0 0 3px rgba(0,0,0,0.4);"></div>
<svg class="a" style="left:700.5px;top:55.5px" width="8" height="8" viewBox="0 0 8 8"><path d="M1.3 1.3 L6.7 6.7 M6.7 1.3 L1.3 6.7" stroke="#1b5cd0" stroke-width="1.3"/></svg>
<div class="t" style="left:298.80px;width:300px;text-align:center;top:85.75px;font-size:12.7px;color:#1a2a4e;font-weight:400;-webkit-text-stroke:0.15px #1a2a4e;">Update Rates</div>
<div class="a" style="left:188px;top:109px;width:522px;height:1px;background:#e8e8e8;"></div>
<svg class="a" style="left:195.6px;top:120px" width="507" height="20" viewBox="0 0 507 20"><path d="M10 0 L244.4 0 L251.4 10 L244.4 20 L10 20 A10 10 0 0 1 10 0 Z" fill="#d8e5fd"/><path d="M246.4 0 L496.2 0 A10 10 0 0 1 496.2 20 L246.4 20 L253.4 10 Z" fill="#02277a"/><path d="M119.9 10 L122.9 13 L128.2 7.4" fill="none" stroke="#1f5fd0" stroke-width="1.4"/></svg>
<div class="t" style="left:524.00px;width:100px;text-align:center;top:126.72px;font-size:8.6px;color:#fff;font-weight:400;">Rate Setup</div>
<div class="a" style="left:196px;top:150.4px;width:506px;height:19.6px;background:#f3f3f3;border-radius:4px;"></div>
<div class="t" style="left:205.5px;top:154.76px;font-size:12.8px;color:#1a2a4e;font-weight:400;-webkit-text-stroke:0.15px #1a2a4e;">Filters</div>
<div class="a" style="left:195.9px;top:183.9px;width:3.2px;height:3.2px;background:#a0103e;border-radius:50%;"></div>
<div class="t" style="left:201.5px;top:182.40px;font-size:8.5px;color:#444;font-weight:400;">Rate Type</div>
<div class="a" style="left:195px;top:194px;width:507px;height:20px;border:1px solid #8c8c8c;border-radius:5px;background:#fff;box-sizing:border-box;"></div>
<div class="t" style="left:200.5px;top:200.30px;font-size:8.5px;color:#333;font-weight:400;">Nightly Rate</div>
<svg class="a" style="left:688.1px;top:202px" width="7" height="5" viewBox="0 0 7 5"><path d="M0.6 0.4 L6.4 0.4 Q6.8 0.4 6.5 0.9 L3.9 4.3 Q3.5 4.8 3.1 4.3 L0.5 0.9 Q0.2 0.4 0.6 0.4 Z" fill="#303030"/></svg>
<div class="a" style="left:195.9px;top:224.3px;width:3.2px;height:3.2px;background:#a0103e;border-radius:50%;"></div>
<div class="t" style="left:201.5px;top:222.80px;font-size:8.5px;color:#444;font-weight:400;">Affected Days</div>
<div class="a" style="left:195px;top:234.5px;width:507px;height:20px;border:1px solid #8c8c8c;border-radius:5px;background:#fff;box-sizing:border-box;"></div>
<svg class="a" style="left:688.1px;top:242.5px" width="7" height="5" viewBox="0 0 7 5"><path d="M0.6 0.4 L6.4 0.4 Q6.8 0.4 6.5 0.9 L3.9 4.3 Q3.5 4.8 3.1 4.3 L0.5 0.9 Q0.2 0.4 0.6 0.4 Z" fill="#303030"/></svg>
<div class="a" style="left:200.5px;top:237px;width:53.5px;height:16px;border:1px solid #7c7c7c;border-radius:8px;background:#eaf1fd;box-sizing:border-box;"></div>
<div class="t" style="left:206.0px;top:240.80px;font-size:8.5px;color:#22365a;font-weight:400;">Saturday</div>
<svg class="a" style="left:244.0px;top:241.5px" width="7" height="7" viewBox="0 0 7 7"><path d="M0.6 0.6 L6.4 6.4 M6.4 0.6 L0.6 6.4" stroke="#555" stroke-width="1.1"/></svg>
<div class="a" style="left:256.5px;top:237px;width:47px;height:16px;border:1px solid #7c7c7c;border-radius:8px;background:#eaf1fd;box-sizing:border-box;"></div>
<div class="t" style="left:262.0px;top:240.80px;font-size:8.5px;color:#22365a;font-weight:400;">Sunday</div>
<svg class="a" style="left:293.5px;top:241.5px" width="7" height="7" viewBox="0 0 7 7"><path d="M0.6 0.6 L6.4 6.4 M6.4 0.6 L0.6 6.4" stroke="#555" stroke-width="1.1"/></svg>
<div class="a" style="left:195.9px;top:264.3px;width:3.2px;height:3.2px;background:#a0103e;border-radius:50%;"></div>
<div class="t" style="left:201.5px;top:262.80px;font-size:8.5px;color:#444;font-weight:400;">Start Date</div>
<div class="a" style="left:195px;top:275px;width:251.5px;height:20px;border:1px solid #8c8c8c;border-radius:5px;background:#fff;box-sizing:border-box;"></div>
<div class="t" style="left:200.5px;top:280.80px;font-size:8.5px;color:#444;font-weight:400;">Select a date...</div>
<div class="a" style="left:451.4px;top:264.3px;width:3.2px;height:3.2px;background:#a0103e;border-radius:50%;"></div>
<div class="t" style="left:457px;top:262.80px;font-size:8.5px;color:#444;font-weight:400;">End Date</div>
<div class="a" style="left:451px;top:275px;width:251px;height:20px;border:1px solid #8c8c8c;border-radius:5px;background:#fff;box-sizing:border-box;"></div>
<div class="t" style="left:456px;top:280.80px;font-size:8.5px;color:#444;font-weight:400;">Select a date...</div>
<svg class="a" style="left:431.5px;top:280.5px" width="9" height="9" viewBox="0 0 9 9"><path d="M0.5 2.3 Q0.5 1 1.8 1 L7.2 1 Q8.5 1 8.5 2.3 L8.5 2.6 L0.5 2.6 Z" fill="#1b5ad8"/><rect x="2" y="0.2" width="1.3" height="1.4" rx="0.5" fill="#1b5ad8"/><rect x="5.7" y="0.2" width="1.3" height="1.4" rx="0.5" fill="#1b5ad8"/><path d="M0.5 3.4 L8.5 3.4 L8.5 7.3 Q8.5 8.5 7.3 8.5 L1.7 8.5 Q0.5 8.5 0.5 7.3 Z" fill="#1b5ad8"/><rect x="2" y="4.6" width="1.2" height="1" fill="#cfe0ff"/><rect x="4" y="4.6" width="1.2" height="1" fill="#cfe0ff"/><rect x="6" y="4.6" width="1.2" height="1" fill="#cfe0ff"/><rect x="2" y="6.4" width="1.2" height="1" fill="#cfe0ff"/><rect x="4" y="6.4" width="1.2" height="1" fill="#cfe0ff"/></svg>
<svg class="a" style="left:687.5px;top:280.5px" width="9" height="9" viewBox="0 0 9 9"><path d="M0.5 2.3 Q0.5 1 1.8 1 L7.2 1 Q8.5 1 8.5 2.3 L8.5 2.6 L0.5 2.6 Z" fill="#1b5ad8"/><rect x="2" y="0.2" width="1.3" height="1.4" rx="0.5" fill="#1b5ad8"/><rect x="5.7" y="0.2" width="1.3" height="1.4" rx="0.5" fill="#1b5ad8"/><path d="M0.5 3.4 L8.5 3.4 L8.5 7.3 Q8.5 8.5 7.3 8.5 L1.7 8.5 Q0.5 8.5 0.5 7.3 Z" fill="#1b5ad8"/><rect x="2" y="4.6" width="1.2" height="1" fill="#cfe0ff"/><rect x="4" y="4.6" width="1.2" height="1" fill="#cfe0ff"/><rect x="6" y="4.6" width="1.2" height="1" fill="#cfe0ff"/><rect x="2" y="6.4" width="1.2" height="1" fill="#cfe0ff"/><rect x="4" y="6.4" width="1.2" height="1" fill="#cfe0ff"/></svg>
<div class="a" style="left:196px;top:305px;width:506px;height:20px;background:#f3f3f3;border-radius:4px;"></div>
<div class="t" style="left:205.5px;top:309.16px;font-size:12.8px;color:#1a2a4e;font-weight:400;-webkit-text-stroke:0.15px #1a2a4e;">Rate Setup</div>
<div class="a" style="left:195.9px;top:338.3px;width:3.2px;height:3.2px;background:#a0103e;border-radius:50%;"></div>
<div class="t" style="left:201.5px;top:336.80px;font-size:8.5px;color:#444;font-weight:400;">Rate</div>
<svg class="a" style="left:692px;top:336px" width="10" height="9" viewBox="0 0 10 9"><path d="M3 2.5 L6 2.5 A2.6 2.6 0 0 1 6 7.8 L4 7.8" fill="none" stroke="#1b5cd0" stroke-width="1.3"/><path d="M0.8 2.5 L3.6 0 L3.6 5 Z" fill="#1b5cd0"/></svg>
<div class="a" style="left:195px;top:349px;width:507px;height:20px;border:1px solid #8c8c8c;border-radius:5px;background:#fff;box-sizing:border-box;"></div>
<div class="t" style="left:201px;top:354.80px;font-size:8.5px;color:#555;font-weight:400;">$</div>
<div class="a" style="left:194.7px;top:378.3px;width:11.2px;height:11.2px;border:3.3px solid #0d55d8;border-radius:50%;background:#fff;box-sizing:border-box;"></div>
<div class="t" style="left:210.5px;top:379.80px;font-size:8.5px;color:#444;font-weight:400;">Refundable</div>
<div class="a" style="left:195px;top:392px;width:11px;height:11px;border:1px solid #777;border-radius:50%;background:#fff;box-sizing:border-box;"></div>
<div class="t" style="left:210.5px;top:393.80px;font-size:8.5px;color:#444;font-weight:400;">Not Refundable</div>
<div class="a" style="left:186px;top:413px;width:526px;height:1px;background:#e5e5e5;"></div>
<div class="a" style="left:193px;top:423px;width:55px;height:20.5px;border:1px solid #8c8c8c;border-radius:10.5px;background:#fff;box-sizing:border-box;"></div>
<svg class="a" style="left:203.5px;top:429.5px" width="6" height="8" viewBox="0 0 6 8"><path d="M4.8 0.8 L1.4 4 L4.8 7.2" fill="none" stroke="#1b5cd0" stroke-width="1.4"/></svg>
<div class="t" style="left:217px;top:428.71px;font-size:9.2px;color:#1b5cd0;font-weight:400;">Back</div>
<div class="a" style="left:599.5px;top:423px;width:50px;height:20.5px;border:1px solid #8c8c8c;border-radius:10.5px;background:#fff;box-sizing:border-box;"></div>
<div class="t" style="left:599.50px;width:50px;text-align:center;top:428.46px;font-size:9.5px;color:#1b5cd0;font-weight:400;">Cancel</div>
<div class="a" style="left:654px;top:423px;width:50.5px;height:20.5px;background:#0866f9;border-radius:10.5px;"></div>
<div class="t" style="left:654.20px;width:50px;text-align:center;top:428.46px;font-size:9.5px;color:#fff;font-weight:400;">Update</div>
</div></body></html>
